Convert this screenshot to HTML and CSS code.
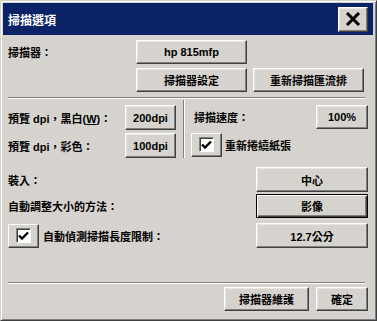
FILE: index.html
```html
<!DOCTYPE html>
<html>
<head>
  <meta charset="utf-8">
  <title>掃描選項</title>
  <link rel="stylesheet" href="styles.css">
</head>
<body>
  <div class="window">
    <div class="titlebar">
      <span class="title">掃描選項</span>
      <button class="btn close">
        <svg width="16" height="14" viewBox="0 0 16 14"><path d="M2 1 L14 13 M14 1 L2 13" stroke="#000" stroke-width="3"/></svg>
      </button>
    </div>

    <div class="content">
      <div class="row r1">
        <span class="label wide">掃描器：</span>
        <button class="btn w111">hp 815mfp</button>
      </div>
      <div class="row r2">
        <span class="label wide"></span>
        <button class="btn w111">掃描器設定</button>
        <button class="btn w111">重新掃描匯流排</button>
      </div>

      <div class="hsep s1"></div>

      <div class="split">
        <div class="col left">
          <div class="row tall">
            <span class="label grow">預覽 dpi，黑白(<u>W</u>)：</span>
            <button class="btn w51">200dpi</button>
          </div>
          <div class="row tall next">
            <span class="label grow">預覽 dpi，彩色：</span>
            <button class="btn w51">100dpi</button>
          </div>
        </div>
        <div class="vsep"></div>
        <div class="col right">
          <div class="row speed">
            <span class="label grow indent">掃描速度：</span>
            <button class="btn w52">100%</button>
          </div>
          <div class="row tall next">
            <span class="check"><span class="box">
              <svg width="11" height="10" viewBox="0 0 11 10"><path d="M1 4.5 L4 7.5 L10 1.5" stroke="#000" stroke-width="2.4" fill="none"/></svg>
            </span></span>
            <span class="label">重新捲繞紙張</span>
          </div>
        </div>
      </div>

      <div class="row tall r-load">
        <span class="label grow">裝入：</span>
        <button class="btn w112">中心</button>
      </div>
      <div class="row r-fit">
        <span class="label grow">自動調整大小的方法：</span>
        <button class="btn w112 default">影像</button>
      </div>
      <div class="row tall r-len">
        <span class="check"><span class="box">
          <svg width="11" height="10" viewBox="0 0 11 10"><path d="M1 4.5 L4 7.5 L10 1.5" stroke="#000" stroke-width="2.4" fill="none"/></svg>
        </span></span>
        <span class="label grow">自動偵測掃描長度限制：</span>
        <button class="btn w112">12.7公分</button>
      </div>

      <div class="hsep s2"></div>

      <div class="row actions">
        <button class="btn w85">掃描器維護</button>
        <button class="btn w52">確定</button>
      </div>
    </div>
  </div>
</body>
</html>
```

FILE: styles.css
```css
html, body {
  margin: 0;
  padding: 0;
  background: #d6d3ce;
}

body {
  font-family: "Liberation Sans", "Noto Sans CJK TC", sans-serif;
  font-size: 11px;
  font-weight: bold;
  color: #000;
}

.window {
  width: 377px;
  height: 321px;
  box-sizing: border-box;
  background: #d6d3ce;
  border: 1px solid;
  border-color: #d6d3ce #404040 #404040 #d6d3ce;
  box-shadow: inset 1px 1px #fff, inset -1px -1px #808080;
  padding: 2px 3px 3px 2px;
  display: flex;
  flex-direction: column;
}

.titlebar {
  height: 32px;
  background: #0b2266;
  display: flex;
  align-items: center;
  justify-content: space-between;
  padding: 0 5px 0 5px;
  flex-shrink: 0;
}

.title {
  color: #fff;
  font-size: 12px;
  font-weight: bold;
}

.content {
  padding: 0 5px 0 5px;
}

.row {
  display: flex;
  align-items: center;
  height: 24px;
}

.tall {
  height: 25px;
}

.r1 { margin-top: 5px; }
.r2 { margin-top: 4px; gap: 6px; }
.r2 .label { margin-right: -6px; }

.label {
  white-space: nowrap;
}

.wide {
  width: 128px;
  flex-shrink: 0;
}

.grow {
  flex: 1;
}

.indent {
  padding-left: 3px;
}

.btn {
  font: inherit;
  color: #000;
  background: #d6d3ce;
  height: 100%;
  box-sizing: border-box;
  padding: 0;
  border: 1px solid;
  border-color: #fff #404040 #404040 #fff;
  box-shadow: inset -1px -1px #808080, inset 1px 1px #e8e6e2;
  display: flex;
  align-items: center;
  justify-content: center;
  flex-shrink: 0;
}

.btn.default {
  border: 1px solid #000;
  box-shadow: inset 1px 1px #fff, inset -1px -1px #404040, inset -2px -2px #808080;
}

.w111 { width: 111px; }
.w112 { width: 112px; }
.w51 { width: 51px; }
.w52 { width: 52px; }
.w85 { width: 85px; }

.close {
  width: 30px;
  height: 25px;
}

.hsep {
  height: 0;
  border-top: 1px solid #808080;
  border-bottom: 1px solid #fff;
  width: 357px;
}

.s1 { margin-top: 5px; }
.s2 { margin-top: 34px; }

.split {
  display: flex;
  height: 59px;
}

.col {
  padding-top: 6px;
}

.left {
  width: 168px;
}

.right {
  flex: 1;
}

.speed {
  height: 24px;
  margin-bottom: 1px;
}

.next {
  margin-top: 3px;
}

.vsep {
  width: 0;
  border-left: 1px solid #808080;
  border-right: 1px solid #fff;
  margin: 1px 6px 0 7px;
}

.check {
  width: 31px;
  height: 24px;
  box-sizing: border-box;
  border: 1px solid;
  border-color: #fff #404040 #404040 #fff;
  box-shadow: inset -1px -1px #808080;
  display: flex;
  align-items: center;
  justify-content: center;
  margin-right: 3px;
  flex-shrink: 0;
}

.box {
  width: 15px;
  height: 15px;
  box-sizing: border-box;
  background: #fff;
  border: 1px solid;
  border-color: #808080 #fff #fff #808080;
  box-shadow: inset 1px 1px #404040;
  display: flex;
  align-items: center;
  justify-content: center;
}

.r-load { margin-top: 9px; }
.r-fit { margin-top: 2px; }
.r-len { margin-top: 5px; }
.r-len .check { margin-right: 4px; }

.actions {
  margin-top: 3px;
  justify-content: flex-end;
  gap: 7px;
}
```
